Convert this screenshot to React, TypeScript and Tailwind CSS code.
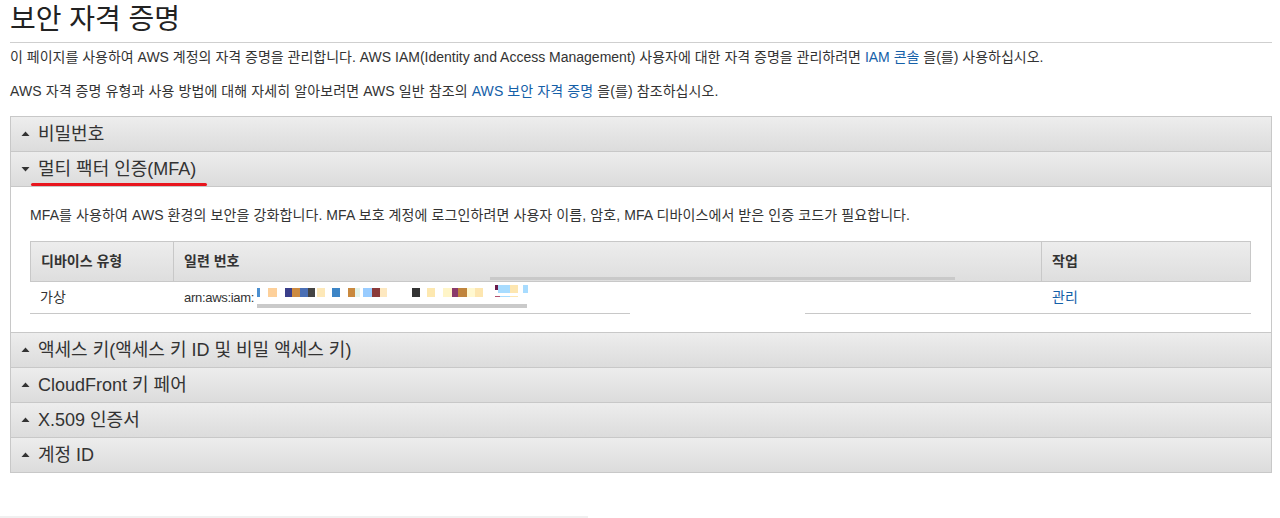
import React from 'react';

const FONT = { fontFamily: '"Liberation Sans", "Noto Sans CJK KR", sans-serif' };

// redaction blocks over the serial number: [left, top, width, height, colour]
const BLOCKS: [number, number, number, number, string][] = [
  [257, 288, 3, 9, '#4a8fd0'],
  [268, 288, 9, 9, '#fdd09a'],
  [285, 288, 7, 9, '#3a3e8a'],
  [292, 288, 8, 9, '#cc8a40'],
  [300, 288, 8, 9, '#4a6fb5'],
  [308, 288, 7, 9, '#444444'],
  [317, 288, 8, 9, '#fde8b8'],
  [332, 288, 8, 9, '#3d85c6'],
  [348, 288, 7, 9, '#c9893e'],
  [355, 288, 5, 9, '#e3f3ea'],
  [363, 288, 9, 9, '#99ccff'],
  [372, 288, 8, 9, '#8a3a3a'],
  [380, 288, 7, 9, '#fde8c0'],
  [412, 288, 8, 9, '#333333'],
  [427, 288, 8, 9, '#fde8b0'],
  [443, 288, 9, 9, '#fff5c8'],
  [452, 288, 6, 9, '#8a3a6a'],
  [458, 288, 9, 9, '#c0843c'],
  [467, 288, 8, 9, '#fff8d0'],
  [475, 288, 8, 9, '#fde6b0'],
  [495, 285, 3, 5, '#6a1a4a'],
  [498, 285, 12, 8, '#a8dcff'],
  [510, 285, 8, 8, '#fde6b0'],
  [523, 285, 5, 8, '#a8dcff'],
  [495, 296, 6, 1, '#b05070'],
  [500, 296, 10, 1, '#a8dcff'],
  [510, 296, 8, 1, '#fde6b0'],
];

const Tri = ({ open }: { open?: boolean }) => (
  <svg width="9" height="6" viewBox="0 0 9 6" className="shrink-0">
    {open ? <path d="M0.5 1 L8.5 1 L4.5 5.5 Z" fill="#333" /> : <path d="M0.5 5 L8.5 5 L4.5 0.5 Z" fill="#333" />}
  </svg>
);

const Header = ({ label, open }: { label: string; open?: boolean }) => (
  <div className="relative flex items-center gap-[8px] h-[35px] pl-[10px] bg-gradient-to-b from-[#ededed] to-[#dcdcdc] border-b border-[#c8c8c8]">
    <Tri open={open} />
    <span className="text-[18px] text-[#333] leading-none">{label}</span>
    {open && <div className="absolute left-[20px] top-[31px] w-[176px] h-[3px] rounded-full bg-[#e8151d]" />}
  </div>
);

export default function App() {
  return (
    <div className="relative w-[1280px] h-[518px] bg-white text-[#333]" style={FONT}>
      <div className="pl-[10px] pr-[8px]">
        <h1 className="text-[28px] leading-none pt-[6px] pb-[8px] text-[#222] font-normal">보안 자격 증명</h1>
        <div className="border-b border-[#cfcfcf]" />
        <p className="text-[14px] mt-[4px] leading-[20px]">
          이 페이지를 사용하여 AWS 계정의 자격 증명을 관리합니다. AWS IAM(Identity and Access Management) 사용자에 대한 자격 증명을 관리하려면{' '}
          <a className="text-[#1560a8]">IAM 콘솔</a> 을(를) 사용하십시오.
        </p>
        <p className="text-[14px] mt-[14px] leading-[20px] tracking-[0.1px]">
          AWS 자격 증명 유형과 사용 방법에 대해 자세히 알아보려면 AWS 일반 참조의{' '}
          <a className="text-[#1560a8]">AWS 보안 자격 증명</a> 을(를) 참조하십시오.
        </p>

        <div className="mt-[15px] border border-[#c8c8c8] border-b-0">
          <Header label="비밀번호" />
          <Header label="멀티 팩터 인증(MFA)" open />
          <div className="h-[146px] border-b border-[#c8c8c8] px-[19px] pt-[19px]">
            <p className="text-[14px] leading-[18px] tracking-[0.1px]">
              MFA를 사용하여 AWS 환경의 보안을 강화합니다. MFA 보호 계정에 로그인하려면 사용자 이름, 암호, MFA 디바이스에서 받은 인증 코드가 필요합니다.
            </p>
            <div className="mt-[17px] w-[1221px] border border-[#c8c8c8] border-b-0">
              <div className="flex h-[40px] bg-gradient-to-b from-[#ededed] to-[#dedede] border-b border-[#c8c8c8] text-[14px] font-bold text-[#333]">
                <div className="w-[143px] flex items-center pl-[10px] border-r border-[#c8c8c8]">디바이스 유형</div>
                <div className="w-[868px] flex items-center pl-[10px] border-r border-[#c8c8c8]">일련 번호</div>
                <div className="flex-1 flex items-center pl-[10px]">작업</div>
              </div>
            </div>
            <div className="flex w-[1221px] h-[32px] items-center text-[14px] border-b border-[#c8c8c8]">
              <div className="w-[143px] pl-[10px]">가상</div>
              <div className="w-[868px] pl-[11px] text-[13px] tracking-[-0.3px]">arn:aws:iam:</div>
              <div className="flex-1 pl-[11px]">
                <a className="text-[#1560a8]">관리</a>
              </div>
            </div>
          </div>
          <Header label="액세스 키(액세스 키 ID 및 비밀 액세스 키)" />
          <Header label="CloudFront 키 페어" />
          <Header label="X.509 인증서" />
          <Header label="계정 ID" />
        </div>
      </div>

      {/* redaction artifacts */}
      <div className="absolute left-[490px] top-[277px] w-[465px] h-[3px] bg-[#c9c9c9]" />
      <div className="absolute left-[257px] top-[304px] w-[270px] h-[4px] bg-[#cacaca]" />
      <div className="absolute left-[630px] top-[311px] w-[175px] h-[3px] bg-white" />
      {BLOCKS.map(([l, t, w, h, c], i) => (
        <div key={i} className="absolute" style={{ left: l, top: t, width: w, height: h, background: c }} />
      ))}
      <div className="absolute left-0 bottom-0 w-[588px] h-[2px] bg-[#f0f0f0]" />
    </div>
  );
}
